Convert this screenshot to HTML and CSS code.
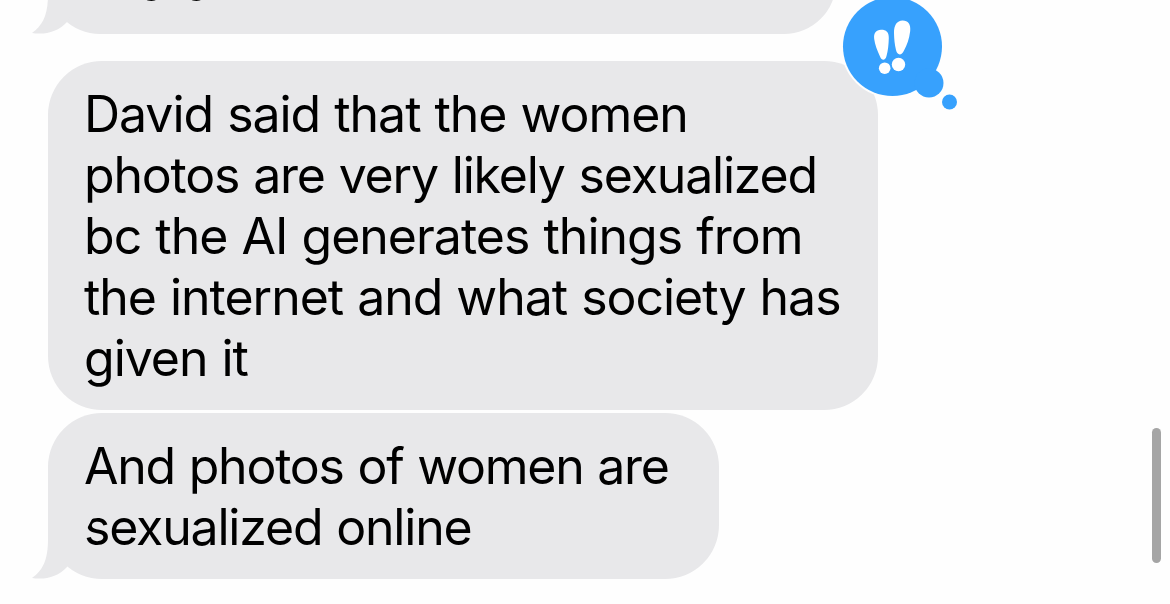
FILE: index.html
```html
<!DOCTYPE html>
<html lang="en">
<head>
    <meta charset="UTF-8">
    <meta name="viewport" content="width=device-width, initial-scale=1.0">
    <title>Messages</title>
    <link rel="stylesheet" href="styles.css">
</head>
<body>

    <div class="chat">
        <div class="bubble bubble-first">
            <p><span class="line">character</span></p>
            <svg class="tail" width="60" height="60" viewBox="0 0 60 60"><path d="M16 0V20C16 41 11 51 0 59C13 61 26 58 35 48L60 0Z"/></svg>
        </div>

        <div class="bubble bubble-main">
            <p>
                <span class="line">David said that the women</span>
                <span class="line tight">photos are very likely sexualized</span>
                <span class="line loose">bc the AI generates things from</span>
                <span class="line">the internet and what society has</span>
                <span class="line">given it</span>
            </p>
            <!-- emphasis reaction -->
            <svg class="reaction" width="120" height="114" viewBox="840 -2 120 114">
                <circle class="ring" cx="892.5" cy="46.5" r="51.5"/>
                <circle class="blue" cx="892.5" cy="46.5" r="49.5"/>
                <circle class="blue" cx="929" cy="83" r="14.5"/>
                <circle class="blue" cx="949.5" cy="102" r="7.5"/>
                <path class="mark" d="M874.2 39C873.5 33 876 30 881 29.8C886 29.7 889 32 888.8 38C888.6 45 888 51 886.5 56C885.3 61 881.7 61 880 56.5C877 50 875 45 874.2 39Z"/>
                <path class="mark" d="M894 33C893.8 25 897 20.5 902.5 20.4C908 20.3 911 24 910.2 31C909.2 39 907 45 904 50.5C901.5 56 897.3 55.5 896 50C894.6 44 894.1 39 894 33Z"/>
                <circle class="mark" cx="884.7" cy="68.2" r="5.8"/>
                <circle class="mark" cx="898.5" cy="64.5" r="6.7"/>
            </svg>
        </div>

        <div class="bubble bubble-last">
            <p>
                <span class="line tighter">And photos of women are</span>
                <span class="line tight">sexualized online</span>
            </p>
            <svg class="tail" width="60" height="60" viewBox="0 0 60 60"><path d="M16 0V20C16 41 11 51 0 59C13 61 26 58 35 48L60 0Z"/></svg>
        </div>
    </div>

    <div class="scrollbar"></div>

</body>
</html>
```
FILE: styles.css
```css
body {
    margin: 0;
    height: 604px;
    overflow: hidden;
    background-color: #fefefe;
    font-family: Inter, sans-serif;
    font-size: 50px;
    line-height: 61px;
    color: #000;
}
.chat {
    display: flex;
    flex-direction: column;
    align-items: flex-start;
    padding-left: 48px;
}
.bubble {
    position: relative;
    box-sizing: border-box;
    padding: 23px 36px 20px;
    border-radius: 54px;
    background-color: #e8e8ea;
}
.bubble p {
    margin: 0;
}
.line {
    display: block;
    white-space: nowrap;
    letter-spacing: -1.03px;
    word-spacing: 1px;
}
.loose {
    letter-spacing: -0.99px;
}
.tight {
    letter-spacing: -1.19px;
}
.tighter {
    letter-spacing: -1.25px;
}
.bubble-first {
    width: 788px;
    height: 104px;
    margin-top: -70px;
    margin-bottom: 27px;
    padding-top: 22px;
}
.bubble-main {
    width: 830px;
    height: 349px;
    margin-bottom: 3px;
}
.bubble-last {
    width: 671px;
    height: 166px;
}
.tail {
    position: absolute;
    left: -16px;
    bottom: 0;
    fill: #e8e8ea;
}
.reaction {
    position: absolute;
    left: 792px;
    top: -63px;
}
.ring {
    fill: #fefefe;
}
.blue {
    fill: #37a1fd;
}
.mark {
    fill: #fff;
}
.scrollbar {
    position: absolute;
    right: 9px;
    top: 428px;
    width: 9px;
    height: 135px;
    border-radius: 5px;
    background-color: #a5a5a5;
}
```
